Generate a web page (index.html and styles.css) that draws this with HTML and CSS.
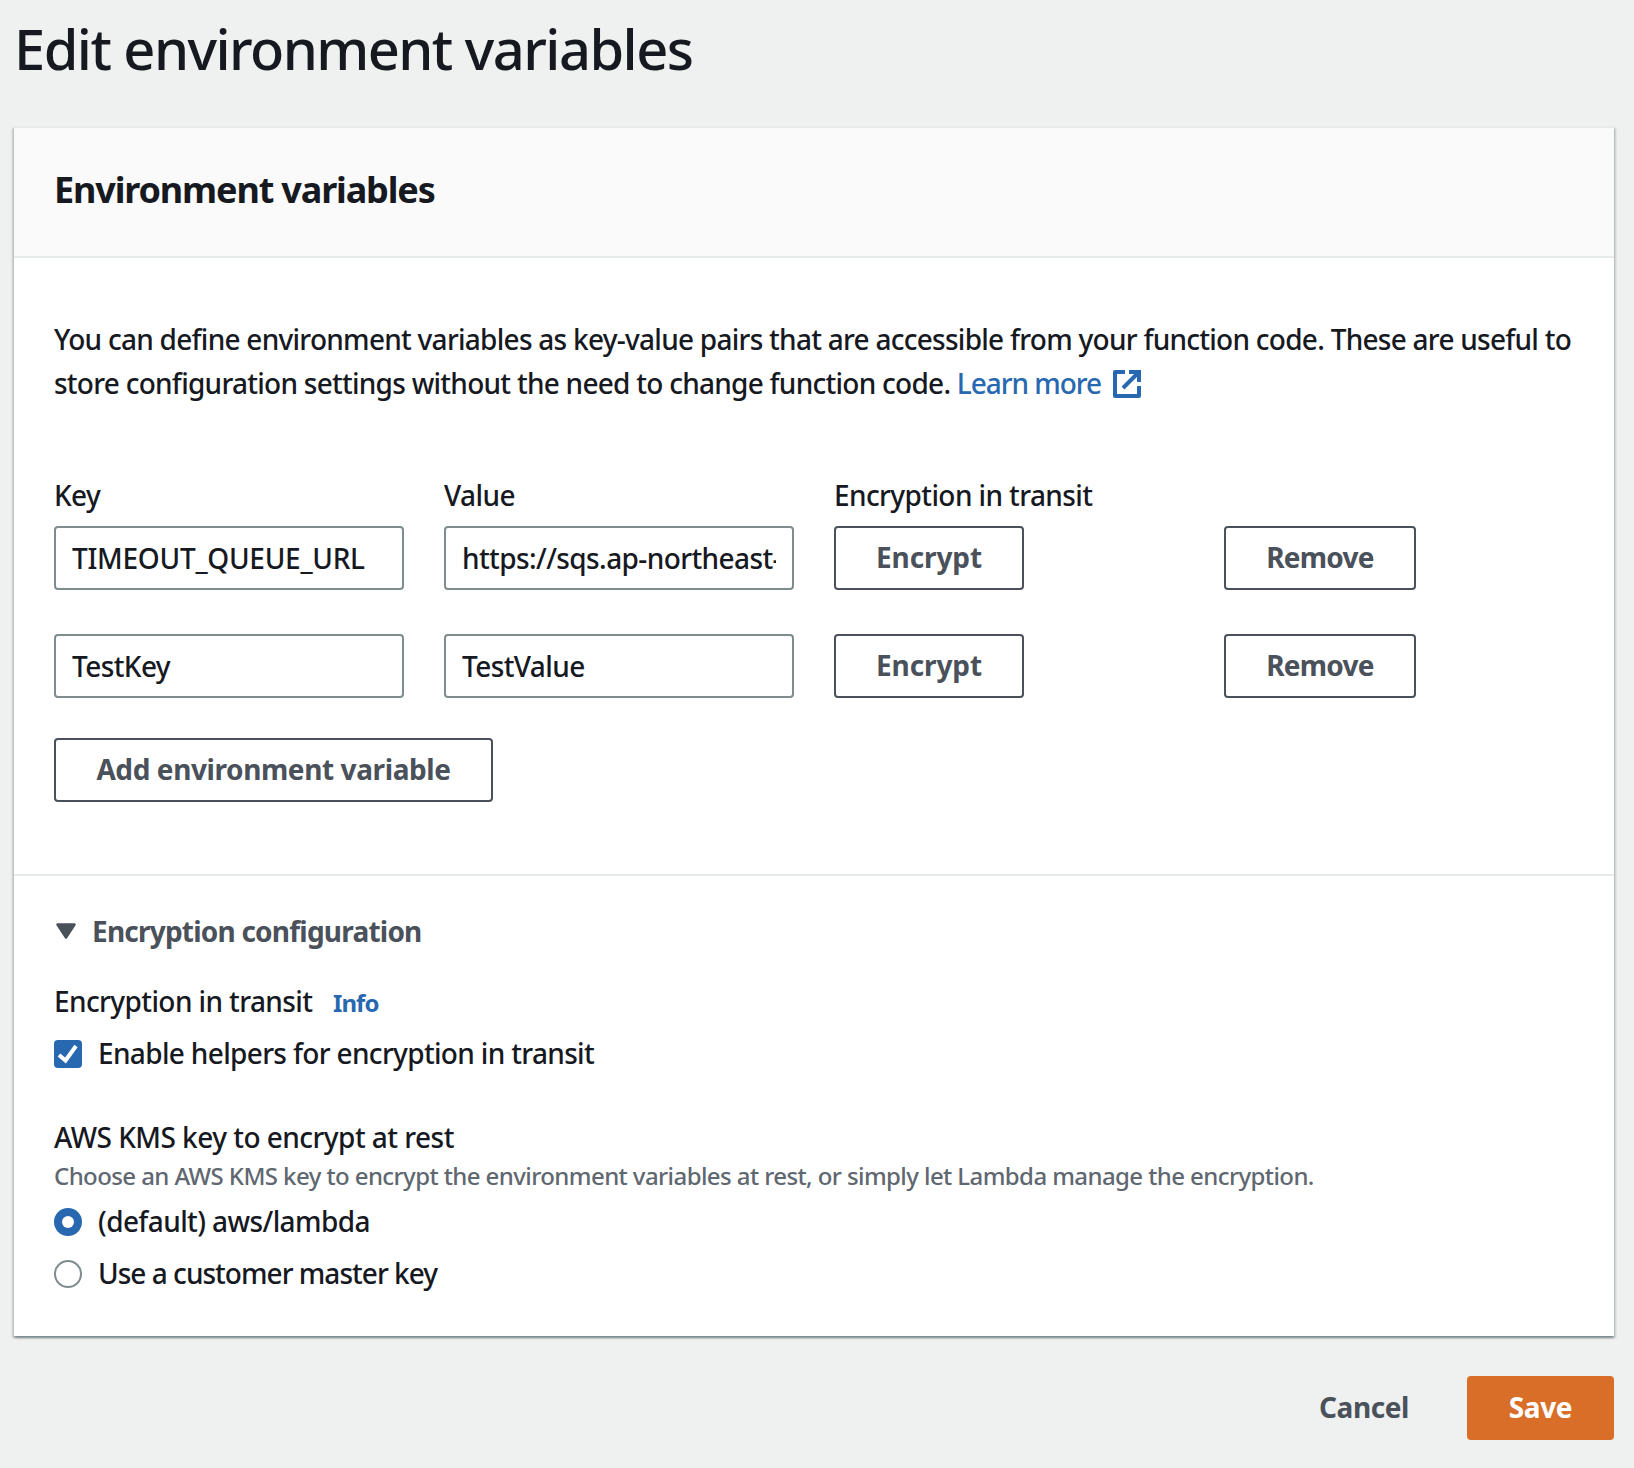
FILE: index.html
```html
<!DOCTYPE html>
<html lang="en">
<head>
<meta charset="utf-8">
<title>Edit environment variables</title>
<link rel="stylesheet" href="styles.css">
</head>
<body>
<main class="page">
  <h1 class="page-title">Edit environment variables</h1>

  <section class="card">
    <header class="card-header"><h2 class="card-title">Environment variables</h2></header>

    <div class="card-body">
      <p class="intro">You can define environment variables as key-value pairs that are accessible from your function code. These are useful to <br>store configuration settings without the need to change function code. <a class="link" href="#">Learn more<svg class="external" viewBox="0 0 28 28" aria-hidden="true"><path d="M12 2H2v24h24V16" fill="none" stroke="currentColor" stroke-width="4" stroke-linejoin="round"/><path d="M16 2h10v10M26 2 10 18" fill="none" stroke="currentColor" stroke-width="4"/></svg></a></p>

      <div class="var-grid var-labels">
        <span>Key</span>
        <span>Value</span>
        <span>Encryption in transit</span>
      </div>
      <div class="var-rows">
        <div class="var-grid">
          <input class="field caps" type="text" value="TIMEOUT_QUEUE_URL" aria-label="Key">
          <input class="field" type="text" value="https://sqs.ap-northeast-1.amazonaws.com/" aria-label="Value">
          <button class="btn encrypt">Encrypt</button>
          <button class="btn remove">Remove</button>
        </div>
        <div class="var-grid">
          <input class="field" type="text" value="TestKey" aria-label="Key">
          <input class="field" type="text" value="TestValue" aria-label="Value">
          <button class="btn encrypt">Encrypt</button>
          <button class="btn remove">Remove</button>
        </div>
      </div>
      <button class="btn add">Add environment variable</button>
    </div>

    <div class="encryption">
      <h3 class="expander">
        <svg class="caret" viewBox="0 0 22 18" aria-hidden="true"><path d="M2.500 2.500h17L11 15.500z" fill="currentColor" stroke="currentColor" stroke-width="2.500" stroke-linejoin="round"/></svg>
        Encryption configuration
      </h3>
      <div class="group-label">Encryption in transit <a class="info" href="#">Info</a></div>
      <label class="option helpers">
        <svg class="control" viewBox="0 0 28 28" aria-hidden="true"><rect width="28" height="28" rx="4" fill="#2768b0"/><path d="m5 15 6.500 5.500L22 6" fill="none" stroke="#fff" stroke-width="4"/></svg>
        Enable helpers for encryption in transit
      </label>
      <div class="group-label kms">AWS KMS key to encrypt at rest</div>
      <div class="hint">Choose an AWS KMS key to encrypt the environment variables at rest, or simply let Lambda manage the encryption.</div>
      <label class="option">
        <svg class="control" viewBox="0 0 28 28" aria-hidden="true"><circle cx="14" cy="14" r="14" fill="#2768b0"/><circle cx="14" cy="14" r="6" fill="#fff"/></svg>
        (default) aws/lambda
      </label>
      <label class="option cmk">
        <svg class="control" viewBox="0 0 28 28" aria-hidden="true"><circle cx="14" cy="14" r="13" fill="#fff" stroke="#7e8c8d" stroke-width="2"/></svg>
        Use a customer master key
      </label>
    </div>
  </section>

  <footer class="actions">
    <button class="btn cancel">Cancel</button>
    <button class="btn save">Save</button>
  </footer>
</main>
</body>
</html>
```
FILE: styles.css
```css
* { box-sizing: border-box; }

body {
  margin: 0;
  background: #eff1f0;
  color: #16191f;
  font: 500 28px/44px "Noto Sans", "Open Sans", sans-serif;
  letter-spacing: -0.6px;
}

h1, h2, h3, p { margin: 0; }
a { color: #2768b0; text-decoration: none; }

.page { padding: 14px 20px 28px 14px; }

.page-title {
  height: 112px;
  font-size: 56px;
  line-height: 68px;
  font-weight: 500;
  letter-spacing: -1.55px;
}

.card {
  background: #fff;
  border-top: 2px solid #e8ebea;
  box-shadow: 0 2px 2px 0 rgba(0, 28, 36, .3), 2px 2px 2px 0 rgba(0, 28, 36, .15), -2px 2px 2px 0 rgba(0, 28, 36, .15);
}

.card-header {
  padding: 40px 40px 44px;
  background: #fafafa;
  border-bottom: 2px solid #e7ebea;
}

.card-title {
  font-size: 36px;
  line-height: 44px;
  font-weight: 700;
  letter-spacing: -1.15px;
}

.card-body { padding: 59px 40px 72px; }

.intro { margin-bottom: 68px; white-space: nowrap; letter-spacing: -0.735px; }
.link { letter-spacing: -1.05px; }
.external { width: 28px; height: 28px; margin-left: 11.5px; vertical-align: -4px; }

.var-grid {
  display: grid;
  grid-template-columns: repeat(4, 350px);
  column-gap: 40px;
  justify-items: start;
}
.var-labels { margin-bottom: 9px; }
.var-rows { display: grid; row-gap: 44px; margin-bottom: 40px; }

.field {
  width: 100%;
  height: 64px;
  padding: 0 16px;
  border: 2px solid #7e8c8d;
  border-radius: 4px;
  background: #fff;
  color: inherit;
  font: inherit;
  letter-spacing: inherit;
}
.caps { letter-spacing: -0.27px; }

.btn {
  display: block;
  height: 64px;
  padding: 0 0 2px;
  border: 2px solid #4a515b;
  border-radius: 4px;
  background: #fff;
  color: #4a515b;
  font: 700 28px/58px "Noto Sans", "Open Sans", sans-serif;
  letter-spacing: -0.4px;
}
.encrypt { width: 190px; letter-spacing: -0.1px; }
.remove { width: 192px; letter-spacing: -0.75px; }
.add { width: 439px; }

.encryption {
  padding: 33px 40px 41px;
  border-top: 2px solid #e7ebea;
}

.expander {
  display: flex;
  align-items: center;
  gap: 15px;
  margin-bottom: 26px;
  color: #4a515b;
  padding-left: 1px;
  font-size: 28px;
  font-weight: 700;
  letter-spacing: -0.78px;
}
.caret { width: 22px; height: 18px; }

.info { margin-left: 14px; font-size: 24px; line-height: 1; font-weight: 700; letter-spacing: -0.95px; }

.option {
  display: flex;
  gap: 16px;
  align-items: flex-start;
}
.control { width: 28px; height: 28px; margin-top: 9px; flex: none; }
.helpers { margin: 8px 0 40px; letter-spacing: -0.66px; }
.kms { letter-spacing: -0.53px; }

.hint {
  margin: 1px 0 7px;
  color: #5f6770;
  font-size: 24px;
  line-height: 32px;
  letter-spacing: -0.59px;
  white-space: nowrap;
}
.cmk { margin-top: 8px; letter-spacing: -0.97px; }

.actions {
  display: flex;
  justify-content: flex-end;
  gap: 16px;
  margin-top: 40px;
}
.cancel { width: 174px; border-color: transparent; background: transparent; }
.save { width: 147px; border-color: #d86e27; background: #d86e27; color: #fff; }
```
